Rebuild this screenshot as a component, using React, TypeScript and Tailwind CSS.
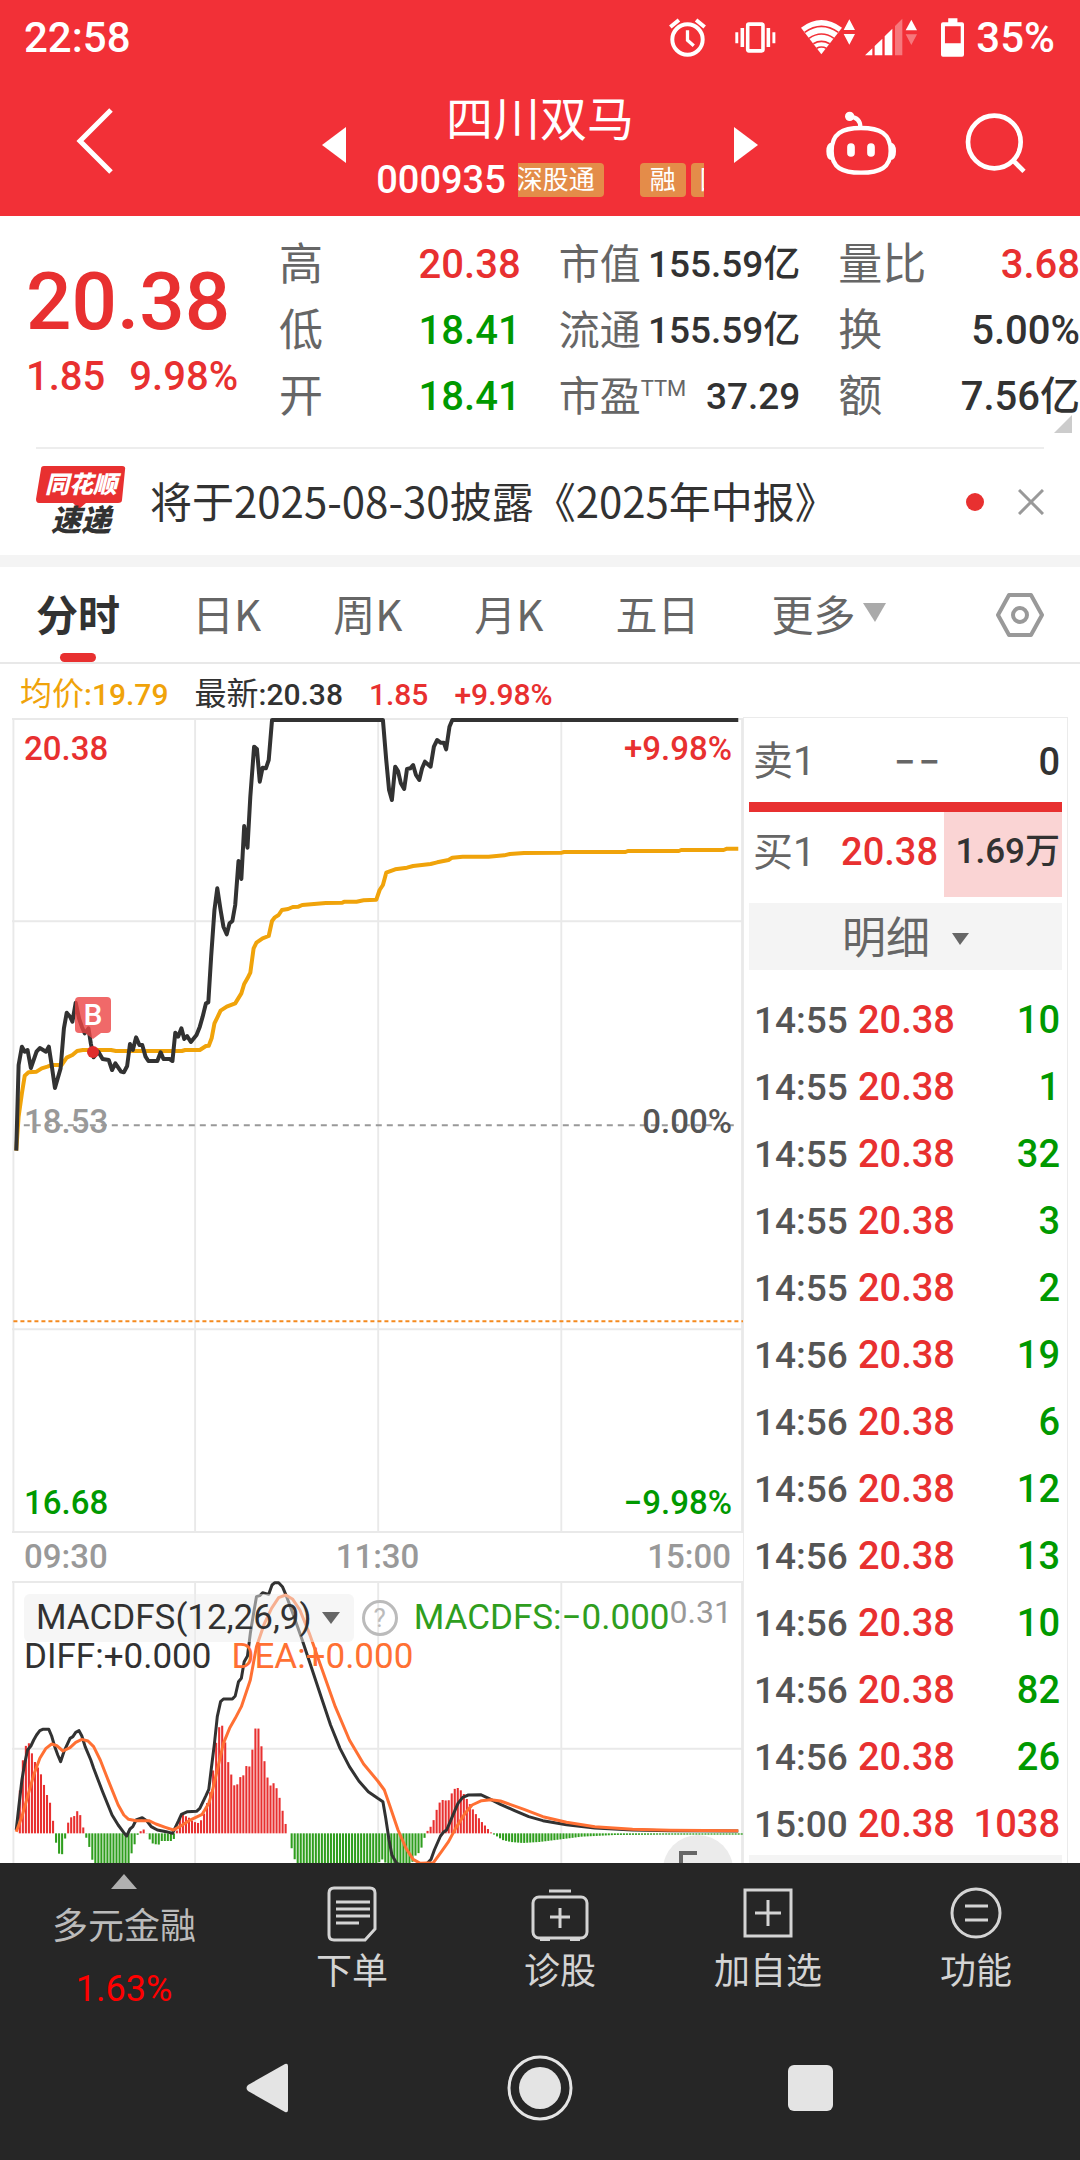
import React, { useState } from "react";

const quoteColumns = [
    [
        { label: "高", value: "20.38", color: "text-[#e83030]" },
        { label: "低", value: "18.41", color: "text-[#009900]" },
        { label: "开", value: "18.41", color: "text-[#009900]" },
    ],
    [
        { label: "市值", value: "155.59亿", color: "text-[#323232]" },
        { label: "流通", value: "155.59亿", color: "text-[#323232]" },
        { label: "市盈", sup: "TTM", value: "37.29", color: "text-[#323232]" },
    ],
    [
        { label: "量比", value: "3.68", color: "text-[#e83030]" },
        { label: "换", value: "5.00%", color: "text-[#323232]" },
        { label: "额", value: "7.56亿", color: "text-[#323232]" },
    ],
];

const tabs = ["分时", "日K", "周K", "月K", "五日"];

const trades = [
    { time: "14:55", price: "20.38", volume: 10 },
    { time: "14:55", price: "20.38", volume: 1 },
    { time: "14:55", price: "20.38", volume: 32 },
    { time: "14:55", price: "20.38", volume: 3 },
    { time: "14:55", price: "20.38", volume: 2 },
    { time: "14:56", price: "20.38", volume: 19 },
    { time: "14:56", price: "20.38", volume: 6 },
    { time: "14:56", price: "20.38", volume: 12 },
    { time: "14:56", price: "20.38", volume: 13 },
    { time: "14:56", price: "20.38", volume: 10 },
    { time: "14:56", price: "20.38", volume: 82 },
    { time: "14:56", price: "20.38", volume: 26 },
    { time: "15:00", price: "20.38", volume: 1038, up: true },
];

// intraday curves, x grows with the minute of the session
const pricePoints =
    "34,1352 39,1095 46,1040 52,1055 58,1050 65,1104 77,1055 84,1044 97,1055 103,1040 109,1095 116,1164 128,1105 135,985 141,938 148,950 153,965 160,908 167,955 173,980 179,1000 187,985 192,1030 198,1072 208,1055 217,1077 230,1080 237,1110 244,1090 256,1115 262,1117 269,1098 275,1032 281,1050 288,1012 295,1035 301,1035 308,1070 314,1083 333,1083 340,1057 346,1077 359,1077 365,1083 371,998 377,1010 384,985 390,1017 396,1008 404,1026 416,1005 423,980 429,950 436,910 441,907 447,770 454,630 460,565 467,630 473,680 480,703 486,670 492,663 498,615 505,483 511,537 517,378 524,443 530,290 538,140 544,147 550,245 556,203 563,205 569,180 576,60 811,60 818,180 824,270 830,300 837,200 843,213 849,250 856,267 862,207 869,205 875,195 881,225 888,240 894,205 900,185 912,200 919,140 926,120 933,128 940,128 945,148 952,80 958,60 1564,60";
const averagePoints =
    "34,1352 39,1250 46,1180 52,1127 60,1117 77,1115 88,1105 100,1100 109,1095 130,1095 141,1073 153,1065 163,1053 175,1050 235,1050 245,1053 385,1053 392,1050 423,1050 436,1038 442,1037 448,1015 454,970 461,950 467,932 480,920 498,910 511,880 517,852 524,835 530,818 537,745 543,728 556,715 569,708 576,663 582,652 590,645 597,630 610,627 620,621 632,620 640,615 690,609 725,608 730,605 755,605 770,601 797,599 804,570 811,555 818,518 837,508 862,503 875,498 912,492 926,487 950,480 958,473 980,470 1035,470 1068,466 1080,462 1110,459 1190,458 1195,456 1325,456 1330,453 1438,453 1443,450 1533,450 1540,446 1564,446";
const diffPoints =
    "34,1050 39,985 46,900 52,850 58,810 65,798 71,780 77,765 84,752 90,748 103,748 109,768 116,802 122,825 128,845 135,815 148,775 154,770 160,757 167,752 173,768 180,800 192,840 198,865 217,935 237,1005 250,1035 262,1058 268,1068 275,1047 281,1040 288,1020 301,1013 311,1023 320,1040 333,1050 352,1055 365,1060 378,1022 384,1003 397,995 416,994 423,985 436,947 442,928 447,870 454,790 460,710 467,665 473,657 492,657 498,648 505,605 511,595 517,545 524,528 530,460 537,400 543,350 550,347 556,338 569,343 576,315 582,308 590,308 598,320 607,350 620,400 640,480 660,565 680,650 700,735 720,805 740,860 760,903 780,935 800,955 811,965 817,1015 824,1080 830,1125 840,1150 870,1165 905,1150 913,1138 920,1110 933,1068 939,1057 946,1050 958,1010 970,970 980,952 992,945 1018,944 1035,955 1060,973 1090,992 1120,1010 1150,1022 1200,1034 1260,1044 1340,1050 1420,1052 1564,1053";
const deaPoints =
    "34,1055 46,1010 58,950 71,885 84,835 97,805 109,792 120,797 133,813 148,803 160,787 173,778 186,783 198,800 212,840 230,905 250,975 262,1005 272,1018 288,1022 315,1022 330,1032 350,1042 367,1050 380,1040 400,1022 428,1003 442,970 450,930 460,870 473,790 486,745 498,715 511,680 530,600 543,500 560,430 575,385 590,353 605,345 620,358 635,390 655,460 680,560 710,680 740,780 770,852 800,903 814,930 825,975 843,1050 860,1105 875,1138 890,1150 918,1148 935,1115 950,1085 965,1045 985,1000 1000,975 1020,962 1040,959 1060,963 1080,973 1110,988 1150,1010 1200,1027 1260,1040 1340,1048 1420,1051 1564,1052";

// envelope of the MACD histogram, bars are sampled from it once a minute
const ZERO = 1060;
const envelope: number[][] = [
    [34, 1060], [39, 937], [46, 838], [52, 798], [58, 787], [65, 820], [71, 845], [77, 860], [84, 882], [90, 912],
    [97, 945], [103, 965], [109, 1013], [113, 1060], [116, 1087], [122, 1120], [128, 1130], [135, 1078], [138, 1060],
    [141, 1030], [148, 1012], [154, 1010], [160, 992], [167, 1003], [173, 1038], [177, 1060], [186, 1097], [192, 1135],
    [198, 1160], [205, 1200], [268, 1180], [275, 1125], [281, 1100], [290, 1060], [301, 1047], [308, 1060], [314, 1077],
    [320, 1090], [333, 1095], [340, 1083], [365, 1083], [368, 1060], [373, 1050], [379, 1012], [385, 1005], [397, 1012],
    [404, 1022], [416, 1030], [423, 1022], [430, 1000], [436, 970], [441, 950], [447, 900], [454, 800], [460, 750],
    [466, 722], [473, 770], [479, 835], [486, 875], [492, 912], [498, 925], [505, 887], [511, 903], [517, 852],
    [524, 870], [530, 835], [537, 752], [543, 728], [550, 790], [556, 828], [562, 880], [569, 920], [575, 907],
    [581, 915], [588, 943], [594, 978], [600, 1017], [607, 1057], [609, 1060], [614, 1097], [620, 1130], [627, 1160],
    [797, 1160], [803, 1140], [811, 1137], [817, 1160], [868, 1160], [875, 1130], [888, 1115], [894, 1087], [900, 1060],
    [907, 1045], [913, 1035], [920, 1003], [926, 972], [933, 962], [939, 957], [946, 968], [952, 948], [958, 930],
    [965, 922], [971, 927], [978, 937], [990, 965], [1003, 997], [1016, 1022], [1029, 1043], [1036, 1055], [1040, 1060],
    [1048, 1067], [1055, 1073], [1062, 1080], [1080, 1086], [1105, 1089], [1140, 1086], [1180, 1079], [1230, 1070],
    [1300, 1065], [1400, 1064], [1570, 1064],
];

const valueAt = (x: number) => {
    const i = envelope.findIndex((p) => p[0] >= x);
    if (i <= 0) return ZERO;
    const [x0, y0] = envelope[i - 1];
    const [x1, y1] = envelope[i];
    return y0 + ((y1 - y0) * (x - x0)) / (x1 - x0);
};

const bars = Array.from({ length: 241 }, (_, i) => {
    const x = 33 + i * 6.4;
    return { x, y: valueAt(x) };
});

const StatusBar = () => (
    <div className="flex h-[74px] items-center pl-6 pr-[25px] text-[42px] font-medium">
        <span className="flex-1">22:58</span>
        <svg className="mr-[29px] h-[39px] w-[37px]" viewBox="59 50 112 118" fill="none" stroke="#fff" strokeWidth="12">
            <circle cx="115" cy="115" r="46" />
            <path d="M115 87v30l19 17" strokeWidth="10" />
            <path d="M63 77l26-21M167 77l-26-21" />
        </svg>
        <svg className="mr-[25px] h-[31px] w-[41px]" viewBox="257 62 126 94" fill="#fff">
            <rect x="296" y="68" width="47" height="82" rx="4" fill="none" stroke="#fff" strokeWidth="11" />
            <path d="M258 93h9v34h-9zM274 80h11v58h-11zM354 80h11v58h-11zM372 93h9v34h-9z" />
        </svg>
        <svg className="mr-[10px] h-[36px] w-[54px]" viewBox="456 54 162 108" fill="#fff">
            <path d="M456 80Q517 34 579 80L517 160Z" />
            <path d="M467 94Q517 58 568 94M480 112Q517 86 555 112M493 128Q517 114 542 128M503 142Q517 134 532 142" fill="none" stroke="#f23037" strokeWidth="5" />
            <path d="M601 55l17 32h-34zM601 131l17-32h-34z" />
        </svg>
        <svg className="mr-[24px] h-[38px] w-[52px]" viewBox="648 50 156 114" fill="#fff">
            <path d="M648 162l22-21v21zM677 162v-28l23-22v50zM707 162v-57l23-23v80z" />
            <path d="M738 162V74l22-22v110zM787 131l17-32h-34z" opacity=".35" />
            <path d="M787 55l17 32h-34z" />
        </svg>
        <svg className="mr-3 h-[39px] w-[23px]" viewBox="875 48 70 117" fill="#fff">
            <path d="M897 48h28v12h14q6 0 6 6v93q0 6-6 6h-58q-6 0-6-6V66q0-6 6-6h16zM887 72v52h48V72z" fillRule="evenodd" />
        </svg>
        <span>35%</span>
    </div>
);

const Header = () => (
    <header className="bg-[#f23037] text-white">
        <StatusBar />
        <div className="grid h-[142px] grid-cols-[1fr_436px_1fr]">
            <button aria-label="返回" className="flex items-center pl-[76px] pb-2">
                <svg className="h-[66px] w-[38px]" viewBox="0 0 38 66" fill="none" stroke="#fff" strokeWidth="5">
                    <path d="M35 2L4 33l31 31" />
                </svg>
            </button>
            <div className="flex items-center justify-between">
                <button aria-label="上一只">
                    <svg className="h-[36px] w-[24px]" viewBox="0 0 24 36" fill="#fff"><path d="M24 0v36L0 18z" /></svg>
                </button>
                <div className="flex flex-col items-center pt-[10px]">
                    <h1 className="h-[60px] text-[47px] leading-[60px]">四川双马</h1>
                    <div className="flex h-[60px] items-center gap-3">
                        <span className="text-[38px] font-medium">000935</span>
                        <div className="flex w-[186px] overflow-hidden text-[26px] leading-[34px]">
                            <span className="-ml-[10px] mr-9 shrink-0 rounded-sm bg-[#e48c49] px-[9px]">深股通</span>
                            <span className="mr-[5px] shrink-0 rounded-sm bg-[#e48c49] px-[10px]">融</span>
                            <span className="shrink-0 rounded-sm bg-[#e48c49] px-[9px]">回</span>
                        </div>
                    </div>
                </div>
                <button aria-label="下一只">
                    <svg className="h-[36px] w-[24px]" viewBox="0 0 24 36" fill="#fff"><path d="M0 0v36l24-18z" /></svg>
                </button>
            </div>
            <div className="flex items-center justify-between pb-1 pl-[67px] pr-[53px]">
                <button aria-label="助手">
                    <svg className="h-[65px] w-[72px]" viewBox="525 330 216 195" fill="none" stroke="#fff" strokeWidth="13">
                        <path d="M633 381C690 381 722 398 722 450C722 500 690 515 633 515C576 515 545 500 545 450C545 398 576 381 633 381Z" />
                        <path d="M631 378C631 358 620 349 600 347" />
                        <circle cx="599" cy="346" r="14" fill="#fff" stroke="none" />
                        <path d="M545 425q-16 0-16 26t16 26zM721 425q17 0 17 26t-17 26z" fill="#fff" stroke="none" />
                        <path d="M603 438v18M663 438v18" strokeWidth="23" strokeLinecap="round" />
                    </svg>
                </button>
                <button aria-label="搜索">
                    <svg className="h-[61px] w-[62px]" viewBox="945 340 186 183" fill="none" stroke="#fff" strokeWidth="14">
                        <circle cx="1033" cy="427" r="79" />
                        <path d="M1089 482l33 33" />
                    </svg>
                </button>
            </div>
        </div>
    </header>
);

const Quote = () => (
    <section className="relative flex h-[231px] pt-4">
        <div className="w-[279px] pl-[26px] font-medium text-[#e83030]">
            <div className="mt-[22px] text-[80px] leading-[96px]">20.38</div>
            <div className="flex gap-6 text-[40px] leading-[54px]">
                <span>1.85</span>
                <span>9.98%</span>
            </div>
        </div>
        <div className="grid flex-1 grid-cols-3 gap-x-[38px]">
            {quoteColumns.map((column, i) => (
                <div key={i}>
                    {column.map((item) => (
                        <div key={item.label} className="flex h-[66px] items-center justify-between whitespace-nowrap">
                            <span className={`flex leading-[60px] text-[#666] ${i === 1 ? "text-[41px]" : "text-[44px]"}`}>
                                {item.label}
                                {"sup" in item && <span className="text-[22px] leading-[44px]">{item.sup}</span>}
                            </span>
                            <span className={`font-medium ${i === 1 ? "text-[37px]" : "text-[40px]"} ${item.color}`}>{item.value}</span>
                        </div>
                    ))}
                </div>
            ))}
        </div>
        <svg className="absolute bottom-[14px] right-2 h-[18px] w-[18px]" viewBox="0 0 18 18" fill="#ccc"><path d="M18 0v18H0z" /></svg>
    </section>
);

const News = () => (
    <section className="mx-9 flex h-[108px] items-center border-t-2 border-[#ededed]">
        <div className="relative mr-6 flex h-[72px] w-[90px] flex-col items-center font-black italic">
            <svg className="absolute inset-0 h-[72px] w-[90px]" viewBox="0 0 90 72" fill="#e83030">
                <path d="M8 0h78q4 0 3 4l-3 30q0 3-4 3H50l-7 6-6-6H3q-3 0-3-4L5 3q0-3 3-3z" />
            </svg>
            <span className="relative text-[24px] leading-[38px] text-white">同花顺</span>
            <span className="relative text-[30px] leading-[34px] text-[#323232]">速递</span>
        </div>
        <a href="#news" className="flex-1 whitespace-nowrap pb-1 font-['Noto_Sans_CJK_SC',sans-serif] text-[42px] leading-[60px] text-[#323232]">
            将于2025-08-30披露《2025年中报》
        </a>
        <span className="mr-[34px] h-[18px] w-[18px] rounded-full bg-[#e83030]" />
        <button aria-label="关闭">
            <svg className="h-[26px] w-[26px]" viewBox="0 0 26 26" stroke="#999" strokeWidth="3"><path d="M1 1l24 24M25 1L1 25" /></svg>
        </button>
    </section>
);

const TabBar = () => {
    const [active, setActive] = useState("分时");

    return (
        <nav className="flex h-[97px] items-center gap-[72px] border-b-2 border-[#e8e8e8] px-9 font-['Noto_Sans_CJK_SC',sans-serif] text-[42px] text-[#666]">
            {tabs.map((tab) => (
                <button
                    key={tab}
                    onClick={() => setActive(tab)}
                    className={`relative h-full whitespace-nowrap pb-1 ${tab === active ? "font-bold text-[#323232]" : ""}`}
                >
                    {tab}
                    {tab === active && <span className="absolute bottom-0 left-6 h-[9px] w-9 rounded-full bg-[#e83030]" />}
                </button>
            ))}
            <button className="flex items-center gap-2 whitespace-nowrap pb-1">
                更多
                <svg className="h-[19px] w-[23px]" viewBox="0 0 23 19" fill="#aaa"><path d="M0 0h23L12 19z" /></svg>
            </button>
            <button aria-label="设置" className="ml-auto">
                <svg className="h-[48px] w-[48px]" viewBox="0 0 48 48" fill="none" stroke="#999" strokeWidth="4" strokeLinejoin="round">
                    <path d="M13 4h22l11 20-11 20H13L2 24z" />
                    <circle cx="24" cy="24" r="7" />
                </svg>
            </button>
        </nav>
    );
};

const PriceChart = () => (
    <div className="relative h-[815px] text-[33px] font-medium leading-[40px]">
        <svg className="h-full w-full" viewBox="25 54 1549 2445" preserveAspectRatio="none" fill="none">
            <g stroke="#e9e9e9" strokeWidth="6">
                <path d="M28 54v2445M413 54v2445M801 54v2445M1189 54v2445M1572 54v2445" strokeWidth="4" />
                <path d="M25 57h1549M25 664h1549M25 1888h1549M25 2496h1549" />
            </g>
            <path d="M50 1276h1514" stroke="#999" strokeWidth="2" strokeDasharray="6 5" vectorEffect="non-scaling-stroke" />
            <path d="M28 1864h1546" stroke="#f58a1f" strokeWidth="2" strokeDasharray="4 3" vectorEffect="non-scaling-stroke" />
            <polyline points={averagePoints} stroke="#f0a30a" strokeWidth="4" strokeLinejoin="round" vectorEffect="non-scaling-stroke" />
            <polyline points={pricePoints} stroke="#323232" strokeWidth="4" strokeLinejoin="round" vectorEffect="non-scaling-stroke" />
        </svg>
        <span className="absolute left-3 top-[11px] text-[#e83030]">20.38</span>
        <span className="absolute right-[11px] top-[11px] text-[#e83030]">+9.98%</span>
        <span className="absolute left-3 top-[384px] text-[#999]">18.53</span>
        <span className="absolute right-[11px] top-[384px] text-[#555]">0.00%</span>
        <span className="absolute bottom-[10px] left-3 text-[#009900]">16.68</span>
        <span className="absolute bottom-[10px] right-[11px] text-[#009900]">−9.98%</span>
        {/* buy marker */}
        <div className="absolute left-[63px] top-[279px] flex h-[64px] w-9 flex-col items-center">
            <span className="h-9 w-9 rounded-sm bg-[#ec4444]/80 text-center text-[30px] leading-9 text-white">B</span>
            <svg className="h-[6px] w-[16px]" viewBox="0 0 16 6" fill="#ec4444" opacity=".8"><path d="M0 0h16L8 6z" /></svg>
            <span className="mt-[7px] h-3 w-3 rounded-full bg-[#e02c2c]" />
        </div>
    </div>
);

const MacdChart = () => (
    <div className="relative h-[282px] overflow-hidden text-[35px] leading-[40px]">
        <svg className="h-full w-full" viewBox="25 303 1549 846" preserveAspectRatio="none" fill="none">
            <path d="M28 303v846M413 303v846M801 303v846M1189 303v846M1572 303v846" stroke="#e9e9e9" strokeWidth="4" />
            <path d="M25 306h1549M25 806h1549" stroke="#e9e9e9" strokeWidth="6" />
            {bars.map((bar) => (
                <rect
                    key={bar.x}
                    x={bar.x}
                    y={Math.min(bar.y, ZERO)}
                    width="4.4"
                    height={Math.abs(bar.y - ZERO)}
                    fill={bar.y < ZERO ? "#e83030" : "#2f9e1e"}
                />
            ))}
            <polyline points={diffPoints} stroke="#323232" strokeWidth="3" strokeLinejoin="round" vectorEffect="non-scaling-stroke" />
            <polyline points={deaPoints} stroke="#ff7033" strokeWidth="3" strokeLinejoin="round" vectorEffect="non-scaling-stroke" />
        </svg>
        <div className="absolute left-3 right-[11px] top-[11px] flex items-center whitespace-nowrap">
            <button className="flex h-12 items-center gap-[10px] rounded-md bg-[#eee]/50 pl-3 pr-[14px] text-[#323232]">
                MACDFS(12,26,9)
                <svg className="h-3 w-[18px]" viewBox="0 0 18 12" fill="#666"><path d="M0 0h18L9 12z" /></svg>
            </button>
            <button aria-label="说明" className="ml-2 h-9 w-9 shrink-0 rounded-full border-3 border-[#bbb] text-[26px] leading-[30px] text-[#bbb]">?</button>
            <span className="ml-4 text-[#2f9e1e]">MACDFS:−0.000</span>
            <span className="mb-3 ml-auto text-[32px] text-[#999]">0.31</span>
        </div>
        <div className="absolute left-3 top-[56px] flex gap-5 whitespace-nowrap">
            <span className="text-[#323232]">DIFF:+0.000</span>
            <span className="text-[#ff7033]">DEA:+0.000</span>
        </div>
        <button aria-label="全屏" className="absolute -bottom-[42px] right-[10px] h-[70px] w-[70px] rounded-full bg-[#ebebeb] pl-4">
            <svg className="h-[38px] w-[38px]" viewBox="0 0 38 38" fill="none" stroke="#666" strokeWidth="4"><path d="M18 2H2v16M20 36h16V20" /></svg>
        </button>
    </div>
);

const OrderBook = () => (
    <aside className="w-[325px] border border-b-0 border-[#ebebeb] px-[5px] text-[38px] font-medium">
        <div className="flex h-[84px] items-center justify-between pl-1 pr-[2px] pt-1 text-[#323232]">
            <span className="text-[40px] font-normal text-[#666]">卖1</span>
            <span className="flex gap-[3px] pr-5 text-[#666]"><span>−</span><span>−</span></span>
            <span>0</span>
        </div>
        <div className="h-[10px] bg-[#e83030]" />
        <div className="flex h-[85px] items-center pl-1">
            <span className="flex-1 pb-1 text-[40px] font-normal text-[#666]">买1</span>
            <span className="pb-1 pr-[6px] text-[#e83030]">20.38</span>
            <span className="flex h-full w-[118px] items-center justify-end bg-[#fad4d4] pb-1 pr-[2px] text-[35px] text-[#323232]">1.69万</span>
        </div>
        <button className="mt-[6px] flex h-[67px] w-full items-center justify-center gap-[22px] bg-[#f4f4f4] pt-1 text-[44px] font-normal text-[#666]">
            明细
            <svg className="h-3 w-[17px]" viewBox="0 0 17 12" fill="#666"><path d="M0 0h17L8 12z" /></svg>
        </button>
        <table className="mt-[14px] w-full">
            <tbody>
                {trades.map((trade, i) => (
                    <tr key={i} className="h-[67px]">
                        <td className="w-[109px] p-0 pl-[5px] pt-[6px] text-[37px] text-[#555]">{trade.time}</td>
                        <td className="p-0 pt-[6px] text-[#e83030]">{trade.price}</td>
                        <td className={`p-0 pr-[2px] pt-[6px] text-right ${trade.up ? "text-[#e83030]" : "text-[#009900]"}`}>{trade.volume}</td>
                    </tr>
                ))}
            </tbody>
        </table>
        <div className="h-2 bg-[#f4f4f4]" />
    </aside>
);

const Toolbar = () => (
    <nav className="grid h-[161px] grid-cols-[248px_repeat(4,1fr)] text-[36px] leading-[48px] text-[#d4d4d4]">
        <button className="flex flex-col items-center pt-[11px] text-[#bbb]">
            <svg className="h-[15px] w-[26px]" viewBox="0 0 26 15" fill="#b0b0b0"><path d="M13 0l13 15H0z" /></svg>
            <span className="mt-[14px]">多元金融</span>
            <span className="mt-[14px] text-[#ff0000]">1.63%</span>
        </button>
        <button className="flex flex-col items-center pt-[23px]">
            <svg className="h-[56px] w-[50px]" viewBox="0 0 50 56" fill="none" stroke="#d4d4d4" strokeWidth="3">
                <path d="M7 2h36q5 0 5 5v36L38 54H7q-5 0-5-5V7q0-5 5-5z" />
                <path d="M9 16h34M9 23h34M9 30h34M9 37h23" />
            </svg>
            <span className="mt-[6px]">下单</span>
        </button>
        <button className="flex flex-col items-center pt-[23px]">
            <svg className="h-[56px] w-[58px]" viewBox="0 0 58 56" fill="none" stroke="#d4d4d4" strokeWidth="3">
                <rect x="2" y="11" width="54" height="41" rx="6" />
                <path d="M18 5h22M29 22v20M19 31h20" />
                <path d="M9 53h10M39 53h10" strokeWidth="4" />
            </svg>
            <span className="mt-[6px]">诊股</span>
        </button>
        <button className="flex flex-col items-center pt-[23px]">
            <svg className="h-[56px] w-[50px]" viewBox="0 0 50 56" fill="none" stroke="#d4d4d4" strokeWidth="3">
                <rect x="2" y="4" width="46" height="46" />
                <path d="M25 14v26M12 27h26" />
            </svg>
            <span className="mt-[6px]">加自选</span>
        </button>
        <button className="flex flex-col items-center pt-[23px]">
            <svg className="h-[56px] w-[52px]" viewBox="0 0 52 56" fill="none" stroke="#d4d4d4" strokeWidth="3">
                <circle cx="26" cy="27" r="24" />
                <path d="M15 20h23M15 34h23" />
            </svg>
            <span className="mt-[6px]">功能</span>
        </button>
    </nav>
);

const App = () => {
    return (
        <div lang="zh-CN" className="flex min-h-screen w-full flex-col overflow-hidden bg-white font-['Roboto','Noto_Sans_CJK_SC',sans-serif]">
            <Header />
            <Quote />
            <News />
            <div className="h-3 bg-[#f4f4f4]" />
            <TabBar />
            <main className="flex">
                <div className="flex-1 pl-3">
                    <div className="flex h-[54px] items-center gap-[26px] whitespace-nowrap pl-2 pt-[6px] text-[30px] font-medium">
                        <span className="text-[#f0a30a]"><span className="text-[32px] font-normal">均价</span>:19.79</span>
                        <span className="text-[#323232]"><span className="text-[32px] font-normal">最新</span>:20.38</span>
                        <span className="text-[#e83030]">1.85</span>
                        <span className="text-[#e83030]">+9.98%</span>
                    </div>
                    <PriceChart />
                    <div className="flex h-[48px] items-center justify-between px-3 text-[33px] font-medium text-[#999]">
                        <span>09:30</span>
                        <span>11:30</span>
                        <span>15:00</span>
                    </div>
                    <MacdChart />
                </div>
                <div className="mr-3 mt-[53px] flex">
                    <OrderBook />
                </div>
            </main>
            <footer className="flex-1 bg-[#262626]">
                <Toolbar />
                <div className="grid h-[128px] grid-cols-[386px_1fr_386px] items-center">
                    <button aria-label="后退" className="flex justify-end pr-[98px]">
                        <svg className="h-[50px] w-[42px]" viewBox="0 0 42 50" fill="#e4e4e4"><path d="M39 1q3-1 3 2v44q0 3-3 2L2 28q-3-3 0-6z" /></svg>
                    </button>
                    <button aria-label="主屏幕" className="flex justify-center">
                        <svg className="h-[66px] w-[66px]" viewBox="0 0 66 66" fill="none" stroke="#e4e4e4" strokeWidth="3">
                            <circle cx="33" cy="33" r="31" />
                            <circle cx="33" cy="33" r="21" fill="#e4e4e4" stroke="none" />
                        </svg>
                    </button>
                    <button aria-label="最近任务" className="flex pl-[94px]">
                        <span className="h-[46px] w-[45px] rounded-md bg-[#e4e4e4]" />
                    </button>
                </div>
            </footer>
        </div>
    );
};

export default App;
